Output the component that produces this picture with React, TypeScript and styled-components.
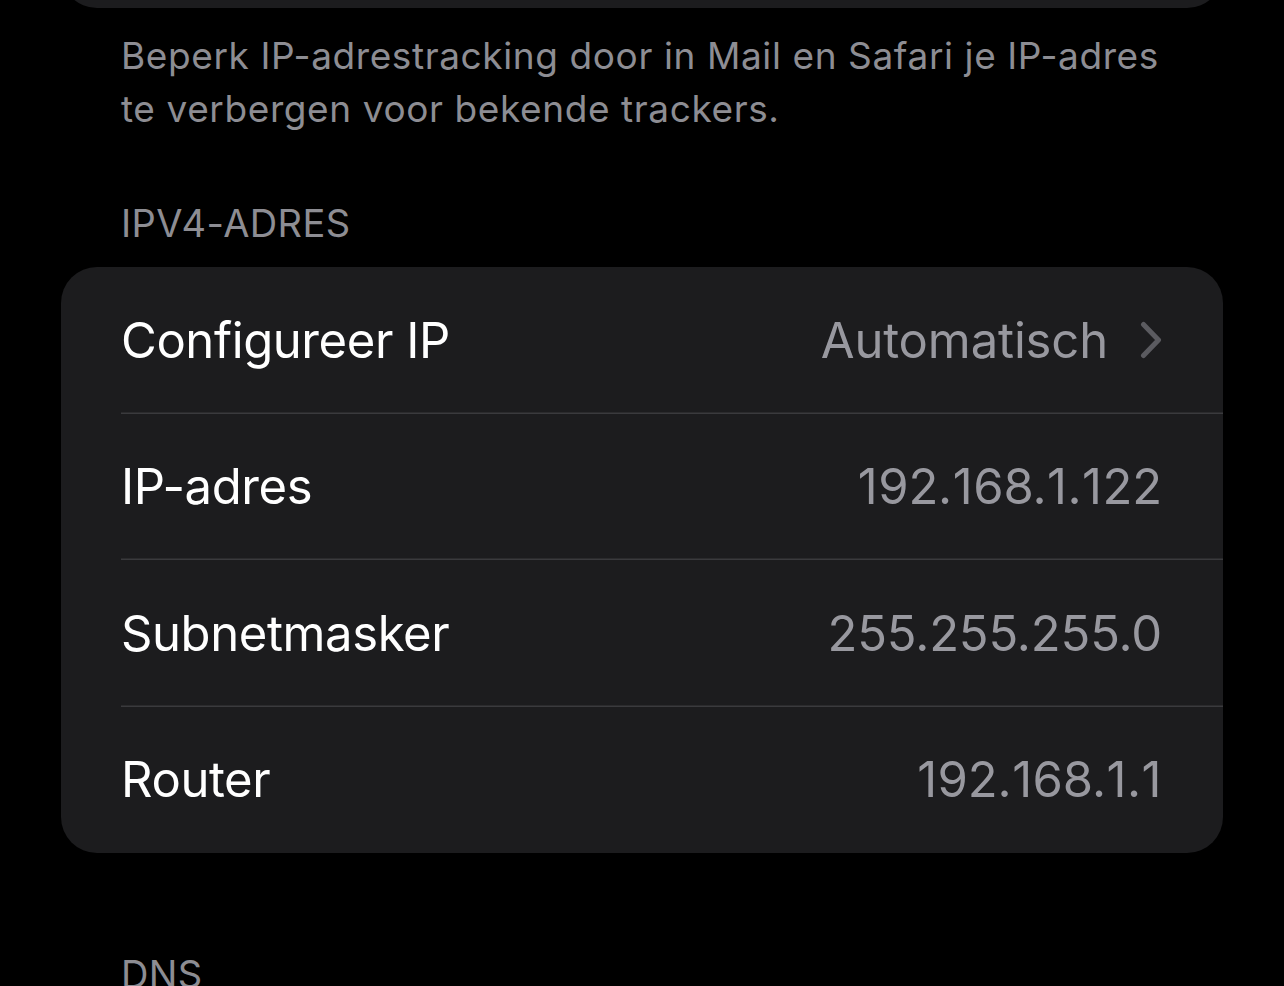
import React from "react";
import styled, { createGlobalStyle } from "styled-components";

const Global = createGlobalStyle`
  html, body { margin: 0; padding: 0; background: #000; }
  body { font-family: Inter, "Noto Sans", "Liberation Sans", sans-serif; -webkit-font-smoothing: antialiased; }
`;

const Page = styled.div`
  width: 1284px;
  height: 986px;
  overflow: hidden;
  background: #000;
  padding: 0 61px;
  box-sizing: border-box;
  display: flex;
  flex-direction: column;
`;

const TopClip = styled.div`
  height: 8px;
  overflow: hidden;
  display: flex;
  flex-direction: column;
  justify-content: flex-end;
  flex-shrink: 0;
`;

const Card = styled.div<{ $height?: number }>`
  background: #1c1c1e;
  border-radius: 36px;
  display: flex;
  flex-direction: column;
  flex-shrink: 0;
  ${(p) => (p.$height ? `height: ${p.$height}px;` : "")}
`;

const Footer = styled.p`
  margin: 0;
  padding: 21px 60px 0;
  font-size: 37px;
  line-height: 53px;
  color: #8d8d93;
  letter-spacing: 0.6px;
  white-space: nowrap;
`;

const SectionHeader = styled.div<{ $top: number }>`
  padding: ${(p) => p.$top}px 60px 0;
  height: 60px;
  margin-bottom: 14px;
  font-size: 38px;
  line-height: 60px;
  color: #8d8d93;
  letter-spacing: 0.4px;
  flex-shrink: 0;
`;

const Row = styled.div`
  height: 146.5px;
  display: flex;
  align-items: center;
  padding-left: 60px;
`;

const RowInner = styled.div<{ $last?: boolean }>`
  flex: 1;
  height: 100%;
  display: flex;
  align-items: center;
  justify-content: space-between;
  padding-right: 61px;
  box-sizing: border-box;
  box-shadow: ${(p) => (p.$last ? "none" : "inset 0 -1.5px 0 #3a3a3d")};
`;

const Label = styled.span`
  font-size: 49px;
  color: #ffffff;
  letter-spacing: -0.4px;
`;

const ValueWrap = styled.span`
  display: flex;
  align-items: center;
  gap: 32px;
`;

const Value = styled.span`
  font-size: 49px;
  color: #98989f;
  letter-spacing: -0.15px;
  white-space: nowrap;
`;

const One = styled.span`
  padding: 0 0.65px;
`;

const Chevron = () => (
  <svg width="22" height="38" viewBox="0 0 22 38" fill="none">
    <path d="M3.5 3.5 L18.5 19 L3.5 34.5" stroke="#5b5b60" strokeWidth="5" strokeLinecap="round" strokeLinejoin="round" />
  </svg>
);

const renderValue = (v: string) =>
  v.split("").map((ch, i) => (ch === "1" ? <One key={i}>1</One> : <React.Fragment key={i}>{ch}</React.Fragment>));

const rows: { label: string; value: string; chevron?: boolean }[] = [
  { label: "Configureer IP", value: "Automatisch", chevron: true },
  { label: "IP-adres", value: "192.168.1.122" },
  { label: "Subnetmasker", value: "255.255.255.0" },
  { label: "Router", value: "192.168.1.1" },
];

export default function App() {
  return (
    <>
      <Global />
      <Page>
        <TopClip>
          <Card $height={80} />
        </TopClip>
        <Footer>
          Beperk IP-adrestracking door in Mail en Safari je IP-adres
          <br />
          te verbergen voor bekende trackers.
        </Footer>
        <SectionHeader $top={58}>IPV4-ADRES</SectionHeader>
        <Card>
          {rows.map((r, i) => (
            <Row key={r.label}>
              <RowInner $last={i === rows.length - 1}>
                <Label>{r.label}</Label>
                <ValueWrap>
                  <Value>{renderValue(r.value)}</Value>
                  {r.chevron && <Chevron />}
                </ValueWrap>
              </RowInner>
            </Row>
          ))}
        </Card>
        <SectionHeader $top={91}>DNS</SectionHeader>
      </Page>
    </>
  );
}
